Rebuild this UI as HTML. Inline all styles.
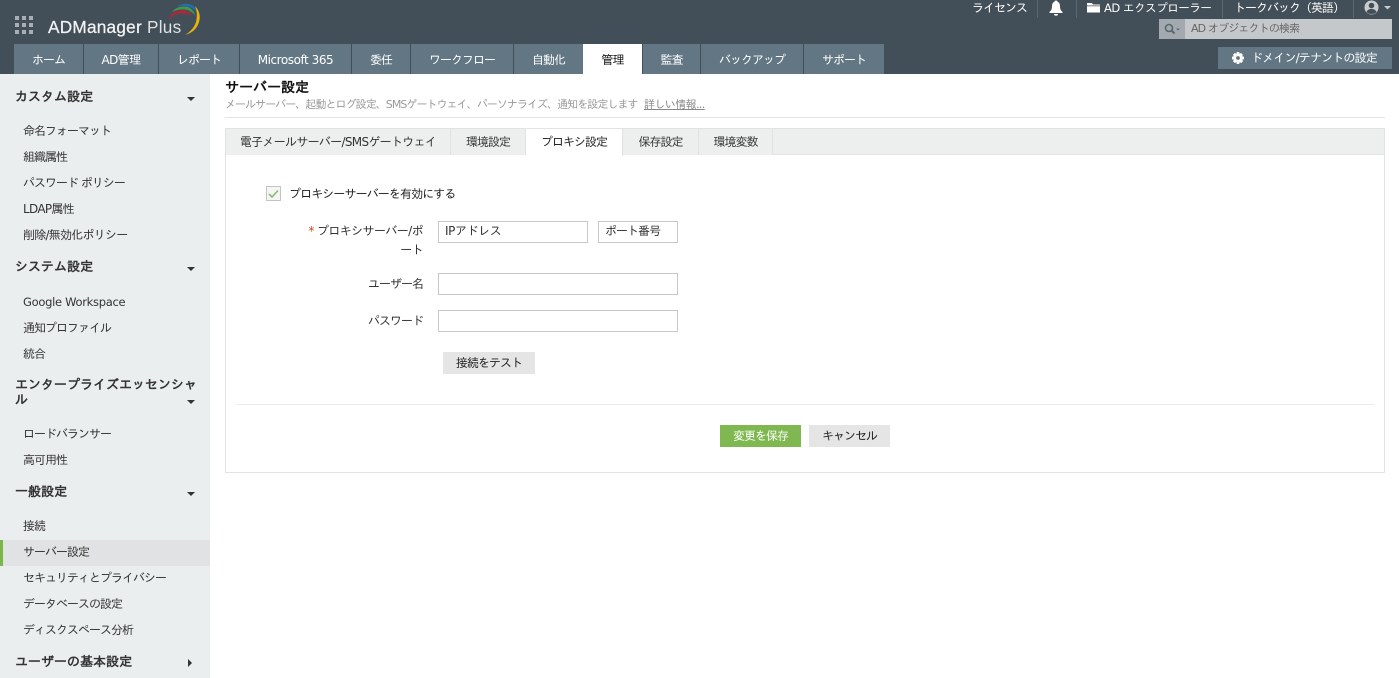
<!DOCTYPE html>
<html lang="ja"><head><meta charset="utf-8"><title>サーバー設定</title>
<style>
html,body{margin:0;padding:0;width:1399px;height:678px;overflow:hidden;background:#fff}
body{position:relative;font-family:"DejaVu Sans","IPAGothic","Noto Sans CJK JP",sans-serif;font-size:12px;color:#222}
.a{position:absolute;white-space:nowrap;line-height:16px}
.b{position:absolute}
.nav{position:absolute;top:44px;height:30px;line-height:33px;background:#627683;color:#fff;text-align:center;font-size:12px;letter-spacing:-1px}
.sh{position:absolute;left:15px;font-size:13px;font-weight:bold;color:#333;white-space:nowrap;line-height:14px}
.si{position:absolute;left:23px;font-size:12px;color:#333;white-space:nowrap;line-height:16px;letter-spacing:-1px}
.tr{position:absolute;width:0;height:0;border-left:4px solid transparent;border-right:4px solid transparent;border-top:4px solid #333;left:187px}
.tab{position:absolute;top:129px;height:26px;line-height:27px;text-align:center;font-size:12px;color:#333;background:#edefef;border-right:1px solid #e0e2e2;box-sizing:border-box;letter-spacing:-1px}
.inp{position:absolute;box-sizing:border-box;border:1px solid #c8c8c8;background:#fff;height:22px;line-height:18px;padding-left:6px;font-size:12px;color:#333;white-space:nowrap;letter-spacing:-1px}
.btn{position:absolute;text-align:center;font-size:12px;box-sizing:border-box;height:22px;line-height:23px;background:#e5e5e5;color:#222;letter-spacing:-1px}
.lb{position:absolute;text-align:right;right:976px;font-size:12px;color:#333;line-height:18px;white-space:nowrap;letter-spacing:-1px}
</style></head><body>
<div class="b" style="left:0;top:0;width:1399px;height:74px;background:#434f58"></div>

<svg class="b" style="left:15px;top:16px" width="19" height="19" viewBox="0 0 19 19" fill="#a9aeb2">
<rect x="0" y="0" width="4" height="4"/><rect x="7" y="0" width="4" height="4"/><rect x="14" y="0" width="4" height="4"/>
<rect x="0" y="7" width="4" height="4"/><rect x="7" y="7" width="4" height="4"/><rect x="14" y="7" width="4" height="4"/>
<rect x="0" y="14" width="4" height="4"/><rect x="7" y="14" width="4" height="4"/><rect x="14" y="14" width="4" height="4"/></svg>
<div class="a" style="left:48px;top:17px;font-family:'Liberation Sans',sans-serif;font-size:17.2px;line-height:20px;color:#f2f3f3;letter-spacing:.25px;-webkit-text-stroke:.25px #f2f3f3">ADManager <span style="color:#dfe2e4;-webkit-text-stroke:0">Plus</span></div>
<svg class="b" style="left:165px;top:2px" width="38" height="34" viewBox="0 0 38 34" fill="none">
<path d="M3 18C5 12 11 7.500 18 8C22 8.300 25 10.500 27 14C23 12 19 11.300 15 11.800C10 12.300 6 14.500 3 18Z" fill="#a52a3c"/>
<path d="M7 10C11 5 17 3.800 22 4.800C26 5.800 29 9 30 13C27 10 24 8 20 7.500C15 7 11 8 7 10Z" fill="#3f9a4e"/>
<path d="M12 4.500C16 2 21 1.200 25 2.200C29 3.300 31.500 7 32.500 11C30 8 27 5.500 23 4.500C19 3.700 15 3.800 12 4.500Z" fill="#1f6fb0"/>
<path d="M30 4C34 8 36 14 34 20C32 27 27 31 20 33C25 30 29 26 31 20C32.500 14 32 9 30 4Z" fill="#e8b30e"/></svg>

<div class="nav" style="left:14px;width:69px">ホーム</div>
<div class="nav" style="left:84px;width:74px;letter-spacing:-.6px">AD管理</div>
<div class="nav" style="left:159px;width:80px">レポート</div>
<div class="nav" style="left:240px;width:111px;letter-spacing:-.45px">Microsoft 365</div>
<div class="nav" style="left:352px;width:58px">委任</div>
<div class="nav" style="left:411px;width:102px">ワークフロー</div>
<div class="nav" style="left:514px;width:69px">自動化</div>
<div class="nav" style="left:583px;width:59px;background:#fff;color:#111">管理</div>
<div class="nav" style="left:643px;width:57px">監査</div>
<div class="nav" style="left:701px;width:102px">バックアップ</div>
<div class="nav" style="left:804px;width:80px">サポート</div>

<div class="a" style="left:972px;top:0;color:#fff;letter-spacing:-1px">ライセンス</div>
<div class="b" style="left:1037px;top:0;width:1px;height:18px;background:#5a6670"></div>
<svg class="b" style="left:1049px;top:0" width="14" height="16" viewBox="0 0 14 16" fill="#fff"><path d="M7 0.500C8 0.500 8.500 1 8.500 1.800C10.500 2.500 11 4.500 11 6.500C11 9 11.800 10.500 13.500 12L13.500 13L0.500 13L0.500 12C2.200 10.500 3 9 3 6.500C3 4.500 3.500 2.500 5.500 1.800C5.500 1 6 0.500 7 0.500Z"/><path d="M5 14L9 14C9 15.200 8 15.800 7 15.800C6 15.800 5 15.200 5 14Z"/></svg>
<div class="b" style="left:1076px;top:0;width:1px;height:18px;background:#5a6670"></div>
<svg class="b" style="left:1087px;top:2px" width="13" height="11" viewBox="0 0 13 11" fill="#fff"><path d="M0 1L5 1L6 2.500L13 2.500L13 3.500L0 3.500ZM0 4.200L13 4.200L13 10.500L0 10.500Z"/></svg>
<div class="a" style="left:1104px;top:0;color:#fff;font-size:11.500px;letter-spacing:-.45px">AD エクスプローラー</div>
<div class="b" style="left:1222px;top:0;width:1px;height:18px;background:#5a6670"></div>
<div class="a" style="left:1234px;top:0;color:#fff;letter-spacing:-1px">トークバック（英語）</div>
<div class="b" style="left:1353px;top:0;width:1px;height:18px;background:#5a6670"></div>
<svg class="b" style="left:1364px;top:0" width="30" height="16" viewBox="0 0 30 16"><circle cx="7.500" cy="7.500" r="7" fill="#c9cdd0"/><circle cx="7.500" cy="5.500" r="2.800" fill="#434f58"/><path d="M2.500 12C3.500 9.500 5.500 9 7.500 9C9.500 9 11.500 9.500 12.500 12C11 13.500 9.500 14 7.500 14C5.500 14 4 13.500 2.500 12Z" fill="#434f58"/><path d="M20 6L27 6L23.500 9.500Z" fill="#c9cdd0"/></svg>

<div class="b" style="left:1159px;top:19px;width:26px;height:20px;background:#a3aaaf"></div>
<div class="b" style="left:1185px;top:19px;width:207px;height:20px;background:#c4c8cb"></div>
<svg class="b" style="left:1164px;top:23px" width="18" height="12" viewBox="0 0 18 12" fill="none"><circle cx="5" cy="5" r="3.500" stroke="#5a6670" stroke-width="1.600"/><path d="M7.500 7.500L10.500 10.500" stroke="#5a6670" stroke-width="2"/><path d="M12 5.500L16 5.500L14 7.500Z" fill="#5a6670"/></svg>
<div class="a" style="left:1191px;top:21px;font-size:11px;color:#666;letter-spacing:-.85px">AD オブジェクトの検索</div>

<div class="b" style="left:1218px;top:47px;width:174px;height:22px;background:#627683"></div>
<svg class="b" style="left:1232px;top:52px" width="12" height="12" viewBox="0 0 12 12"><path d="M4.800 0L7.200 0L7.600 1.700L9.200 1L10.900 2.700L10.100 4.200L12 4.800L12 7.200L10.200 7.700L11 9.300L9.300 11L7.700 10.200L7.200 12L4.800 12L4.300 10.200L2.700 11L1 9.300L1.800 7.700L0 7.200L0 4.800L1.800 4.300L1 2.700L2.700 1L4.300 1.800Z" fill="#fff"/><circle cx="6" cy="6" r="1.900" fill="#627683"/></svg>
<div class="a" style="left:1251px;top:50px;color:#fff;letter-spacing:-.85px">ドメイン/テナントの設定</div>

<div class="b" style="left:0;top:74px;width:210px;height:604px;background:#ebeeef"></div>
<div class="sh" style="top:91px">カスタム設定</div><div class="tr" style="top:97px"></div>
<div class="si" style="top:123px">命名フォーマット</div>
<div class="si" style="top:149px">組織属性</div>
<div class="si" style="top:175px">パスワード ポリシー</div>
<div class="si" style="top:201px;letter-spacing:-.7px">LDAP属性</div>
<div class="si" style="top:227px;letter-spacing:-.75px">削除/無効化ポリシー</div>
<div class="sh" style="top:261px">システム設定</div><div class="tr" style="top:267px"></div>
<div class="si" style="top:294px;font-size:11.500px;letter-spacing:-.3px">Google Workspace</div>
<div class="si" style="top:320px">通知プロファイル</div>
<div class="si" style="top:346px">統合</div>
<div class="sh" style="top:378px;line-height:15px">エンタープライズエッセンシャ<br>ル</div><div class="tr" style="top:400px"></div>
<div class="si" style="top:426px">ロードバランサー</div>
<div class="si" style="top:452px">高可用性</div>
<div class="sh" style="top:486px">一般設定</div><div class="tr" style="top:492px"></div>
<div class="si" style="top:518px">接続</div>
<div class="b" style="left:0;top:540px;width:210px;height:26px;background:#e1e2e3"></div>
<div class="b" style="left:0;top:540px;width:3px;height:26px;background:#7ab648"></div>
<div class="si" style="top:544px">サーバー設定</div>
<div class="si" style="top:570px">セキュリティとプライバシー</div>
<div class="si" style="top:596px">データベースの設定</div>
<div class="si" style="top:622px">ディスクスペース分析</div>
<div class="sh" style="top:656px">ユーザーの基本設定</div>
<div class="b" style="left:188px;top:659px;width:0;height:0;border-top:4px solid transparent;border-bottom:4px solid transparent;border-left:4px solid #333"></div>

<div class="a" style="left:225px;top:80px;font-size:14px;font-weight:bold;color:#111">サーバー設定</div>
<div class="a" style="left:225px;top:97px;font-size:11px;color:#999;letter-spacing:-.95px">メールサーバー、起動とログ設定、SMSゲートウェイ、パーソナライズ、通知を設定します</div>
<div class="a" style="left:644px;top:97px;font-size:11px;color:#888;text-decoration:underline;letter-spacing:-.6px">詳しい情報...</div>
<div class="b" style="left:225px;top:117px;width:1160px;height:1px;background:#e3e3e3"></div>

<div class="b" style="left:225px;top:128px;width:1160px;height:345px;box-sizing:border-box;border:1px solid #e2e2e2"></div>
<div class="b" style="left:226px;top:129px;width:1158px;height:26px;background:#edefef;border-bottom:1px solid #e2e4e4;box-sizing:border-box"></div>
<div class="tab" style="left:226px;width:225px;letter-spacing:-.7px">電子メールサーバー/SMSゲートウェイ</div>
<div class="tab" style="left:451px;width:75px">環境設定</div>
<div class="tab" style="left:526px;width:97px;height:27px;background:#fff;color:#222">プロキシ設定</div>
<div class="tab" style="left:623px;width:76px">保存設定</div>
<div class="tab" style="left:699px;width:74px">環境変数</div>

<div class="b" style="left:266px;top:186px;width:15px;height:15px;box-sizing:border-box;border:1px solid #c4c4c4;background:#f5f5f5"></div>
<svg class="b" style="left:266px;top:186px" width="15" height="15" viewBox="0 0 15 15" fill="none"><path d="M3 8L6 11L12 4.500" stroke="#8dbb66" stroke-width="1.600"/></svg>
<div class="a" style="left:289px;top:186px;letter-spacing:-.9px">プロキシーサーバーを有効にする</div>

<div class="lb" style="top:222px;width:120px;line-height:19px;letter-spacing:-.6px"><span style="color:#e8401e">*</span> プロキシサーバー/ポ<br>ート</div>
<div class="inp" style="left:438px;top:221px;width:150px;letter-spacing:-.4px">IPアドレス</div>
<div class="inp" style="left:598px;top:221px;width:80px">ポート番号</div>
<div class="lb" style="top:275px">ユーザー名</div>
<div class="inp" style="left:438px;top:273px;width:240px"></div>
<div class="lb" style="top:312px">パスワード</div>
<div class="inp" style="left:438px;top:310px;width:240px"></div>
<div class="btn" style="left:443px;top:352px;width:92px">接続をテスト</div>

<div class="b" style="left:236px;top:404px;width:1138px;height:1px;background:#ececec"></div>
<div class="btn" style="left:720px;top:425px;width:81px;background:#7fb850;color:#fff">変更を保存</div>
<div class="btn" style="left:809px;top:425px;width:81px">キャンセル</div>
</body></html>
